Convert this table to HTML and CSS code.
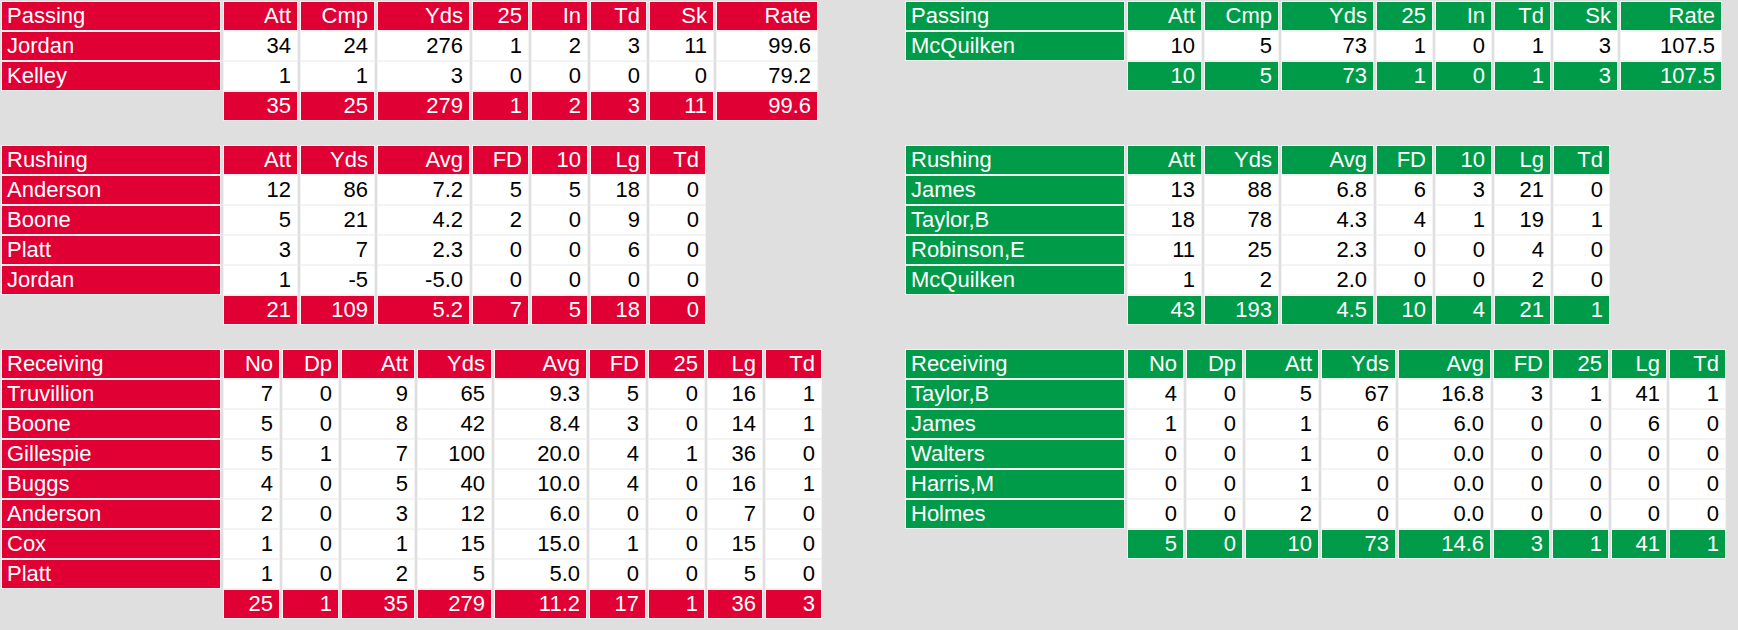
FILE: index.html
```html
<!DOCTYPE html>
<html>
<head>
<meta charset="utf-8">
<link rel="stylesheet" href="styles.css">
</head>
<body>
<div class="board">

  <div class="tbl pass red">
    <div class="c h l">Passing</div><div class="c h">Att</div><div class="c h">Cmp</div><div class="c h">Yds</div><div class="c h">25</div><div class="c h">In</div><div class="c h">Td</div><div class="c h">Sk</div><div class="c h">Rate</div>
    <div class="c h l">Jordan</div><div class="c d">34</div><div class="c d">24</div><div class="c d">276</div><div class="c d">1</div><div class="c d">2</div><div class="c d">3</div><div class="c d">11</div><div class="c d">99.6</div>
    <div class="c h l">Kelley</div><div class="c d">1</div><div class="c d">1</div><div class="c d">3</div><div class="c d">0</div><div class="c d">0</div><div class="c d">0</div><div class="c d">0</div><div class="c d">79.2</div>
    <div class="c e"></div><div class="c h">35</div><div class="c h">25</div><div class="c h">279</div><div class="c h">1</div><div class="c h">2</div><div class="c h">3</div><div class="c h">11</div><div class="c h">99.6</div>
  </div>

  <div class="tbl pass green">
    <div class="c h l">Passing</div><div class="c h">Att</div><div class="c h">Cmp</div><div class="c h">Yds</div><div class="c h">25</div><div class="c h">In</div><div class="c h">Td</div><div class="c h">Sk</div><div class="c h">Rate</div>
    <div class="c h l">McQuilken</div><div class="c d">10</div><div class="c d">5</div><div class="c d">73</div><div class="c d">1</div><div class="c d">0</div><div class="c d">1</div><div class="c d">3</div><div class="c d">107.5</div>
    <div class="c e"></div><div class="c h">10</div><div class="c h">5</div><div class="c h">73</div><div class="c h">1</div><div class="c h">0</div><div class="c h">1</div><div class="c h">3</div><div class="c h">107.5</div>
  </div>

  <div class="tbl rush red">
    <div class="c h l">Rushing</div><div class="c h">Att</div><div class="c h">Yds</div><div class="c h">Avg</div><div class="c h">FD</div><div class="c h">10</div><div class="c h">Lg</div><div class="c h">Td</div>
    <div class="c h l">Anderson</div><div class="c d">12</div><div class="c d">86</div><div class="c d">7.2</div><div class="c d">5</div><div class="c d">5</div><div class="c d">18</div><div class="c d">0</div>
    <div class="c h l">Boone</div><div class="c d">5</div><div class="c d">21</div><div class="c d">4.2</div><div class="c d">2</div><div class="c d">0</div><div class="c d">9</div><div class="c d">0</div>
    <div class="c h l">Platt</div><div class="c d">3</div><div class="c d">7</div><div class="c d">2.3</div><div class="c d">0</div><div class="c d">0</div><div class="c d">6</div><div class="c d">0</div>
    <div class="c h l">Jordan</div><div class="c d">1</div><div class="c d">-5</div><div class="c d">-5.0</div><div class="c d">0</div><div class="c d">0</div><div class="c d">0</div><div class="c d">0</div>
    <div class="c e"></div><div class="c h">21</div><div class="c h">109</div><div class="c h">5.2</div><div class="c h">7</div><div class="c h">5</div><div class="c h">18</div><div class="c h">0</div>
  </div>

  <div class="tbl rush green">
    <div class="c h l">Rushing</div><div class="c h">Att</div><div class="c h">Yds</div><div class="c h">Avg</div><div class="c h">FD</div><div class="c h">10</div><div class="c h">Lg</div><div class="c h">Td</div>
    <div class="c h l">James</div><div class="c d">13</div><div class="c d">88</div><div class="c d">6.8</div><div class="c d">6</div><div class="c d">3</div><div class="c d">21</div><div class="c d">0</div>
    <div class="c h l">Taylor,B</div><div class="c d">18</div><div class="c d">78</div><div class="c d">4.3</div><div class="c d">4</div><div class="c d">1</div><div class="c d">19</div><div class="c d">1</div>
    <div class="c h l">Robinson,E</div><div class="c d">11</div><div class="c d">25</div><div class="c d">2.3</div><div class="c d">0</div><div class="c d">0</div><div class="c d">4</div><div class="c d">0</div>
    <div class="c h l">McQuilken</div><div class="c d">1</div><div class="c d">2</div><div class="c d">2.0</div><div class="c d">0</div><div class="c d">0</div><div class="c d">2</div><div class="c d">0</div>
    <div class="c e"></div><div class="c h">43</div><div class="c h">193</div><div class="c h">4.5</div><div class="c h">10</div><div class="c h">4</div><div class="c h">21</div><div class="c h">1</div>
  </div>

  <div class="tbl recv red">
    <div class="c h l">Receiving</div><div class="c h">No</div><div class="c h">Dp</div><div class="c h">Att</div><div class="c h">Yds</div><div class="c h">Avg</div><div class="c h">FD</div><div class="c h">25</div><div class="c h">Lg</div><div class="c h">Td</div>
    <div class="c h l">Truvillion</div><div class="c d">7</div><div class="c d">0</div><div class="c d">9</div><div class="c d">65</div><div class="c d">9.3</div><div class="c d">5</div><div class="c d">0</div><div class="c d">16</div><div class="c d">1</div>
    <div class="c h l">Boone</div><div class="c d">5</div><div class="c d">0</div><div class="c d">8</div><div class="c d">42</div><div class="c d">8.4</div><div class="c d">3</div><div class="c d">0</div><div class="c d">14</div><div class="c d">1</div>
    <div class="c h l">Gillespie</div><div class="c d">5</div><div class="c d">1</div><div class="c d">7</div><div class="c d">100</div><div class="c d">20.0</div><div class="c d">4</div><div class="c d">1</div><div class="c d">36</div><div class="c d">0</div>
    <div class="c h l">Buggs</div><div class="c d">4</div><div class="c d">0</div><div class="c d">5</div><div class="c d">40</div><div class="c d">10.0</div><div class="c d">4</div><div class="c d">0</div><div class="c d">16</div><div class="c d">1</div>
    <div class="c h l">Anderson</div><div class="c d">2</div><div class="c d">0</div><div class="c d">3</div><div class="c d">12</div><div class="c d">6.0</div><div class="c d">0</div><div class="c d">0</div><div class="c d">7</div><div class="c d">0</div>
    <div class="c h l">Cox</div><div class="c d">1</div><div class="c d">0</div><div class="c d">1</div><div class="c d">15</div><div class="c d">15.0</div><div class="c d">1</div><div class="c d">0</div><div class="c d">15</div><div class="c d">0</div>
    <div class="c h l">Platt</div><div class="c d">1</div><div class="c d">0</div><div class="c d">2</div><div class="c d">5</div><div class="c d">5.0</div><div class="c d">0</div><div class="c d">0</div><div class="c d">5</div><div class="c d">0</div>
    <div class="c e"></div><div class="c h">25</div><div class="c h">1</div><div class="c h">35</div><div class="c h">279</div><div class="c h">11.2</div><div class="c h">17</div><div class="c h">1</div><div class="c h">36</div><div class="c h">3</div>
  </div>

  <div class="tbl recv green">
    <div class="c h l">Receiving</div><div class="c h">No</div><div class="c h">Dp</div><div class="c h">Att</div><div class="c h">Yds</div><div class="c h">Avg</div><div class="c h">FD</div><div class="c h">25</div><div class="c h">Lg</div><div class="c h">Td</div>
    <div class="c h l">Taylor,B</div><div class="c d">4</div><div class="c d">0</div><div class="c d">5</div><div class="c d">67</div><div class="c d">16.8</div><div class="c d">3</div><div class="c d">1</div><div class="c d">41</div><div class="c d">1</div>
    <div class="c h l">James</div><div class="c d">1</div><div class="c d">0</div><div class="c d">1</div><div class="c d">6</div><div class="c d">6.0</div><div class="c d">0</div><div class="c d">0</div><div class="c d">6</div><div class="c d">0</div>
    <div class="c h l">Walters</div><div class="c d">0</div><div class="c d">0</div><div class="c d">1</div><div class="c d">0</div><div class="c d">0.0</div><div class="c d">0</div><div class="c d">0</div><div class="c d">0</div><div class="c d">0</div>
    <div class="c h l">Harris,M</div><div class="c d">0</div><div class="c d">0</div><div class="c d">1</div><div class="c d">0</div><div class="c d">0.0</div><div class="c d">0</div><div class="c d">0</div><div class="c d">0</div><div class="c d">0</div>
    <div class="c h l">Holmes</div><div class="c d">0</div><div class="c d">0</div><div class="c d">2</div><div class="c d">0</div><div class="c d">0.0</div><div class="c d">0</div><div class="c d">0</div><div class="c d">0</div><div class="c d">0</div>
    <div class="c e"></div><div class="c h">5</div><div class="c h">0</div><div class="c h">10</div><div class="c h">73</div><div class="c h">14.6</div><div class="c h">3</div><div class="c h">1</div><div class="c h">41</div><div class="c h">1</div>
  </div>

</div>
</body>
</html>
```

FILE: styles.css
```css
html, body {
  margin: 0;
  padding: 0;
  background: #dfdfdf;
}

body {
  padding: 1px;
  font-family: "Liberation Sans", Arial, sans-serif;
  font-size: 22px;
}

.board {
  display: grid;
  grid-template-columns: 904px auto;
  align-items: start;
  row-gap: 24px;
}

.tbl {
  display: grid;
  column-gap: 2px;
  row-gap: 0;
  grid-auto-rows: 30px;
}

.red { --tone: #e00034; }
.green { --tone: #009b48; }

.pass { grid-template-columns: 220px 75px 75px 93px 57px 57px 57px 65px 102px; }
.rush { grid-template-columns: 220px 75px 75px 93px 57px 57px 57px 57px; }
.recv { grid-template-columns: 220px 57px 57px 74px 75px 93px 57px 57px 56px 57px; }

.c {
  box-sizing: border-box;
  height: 30px;
  border: 1px solid #f3f3f3;
  padding: 0 6px 0 5px;
  line-height: 27px;
  text-align: right;
  white-space: nowrap;
  overflow: hidden;
}

.h {
  background: var(--tone);
  color: #ffffff;
}

.l {
  text-align: left;
}

.d {
  background: #ffffff;
  color: #000000;
}

.e {
  border-color: transparent;
  background: transparent;
}
```
